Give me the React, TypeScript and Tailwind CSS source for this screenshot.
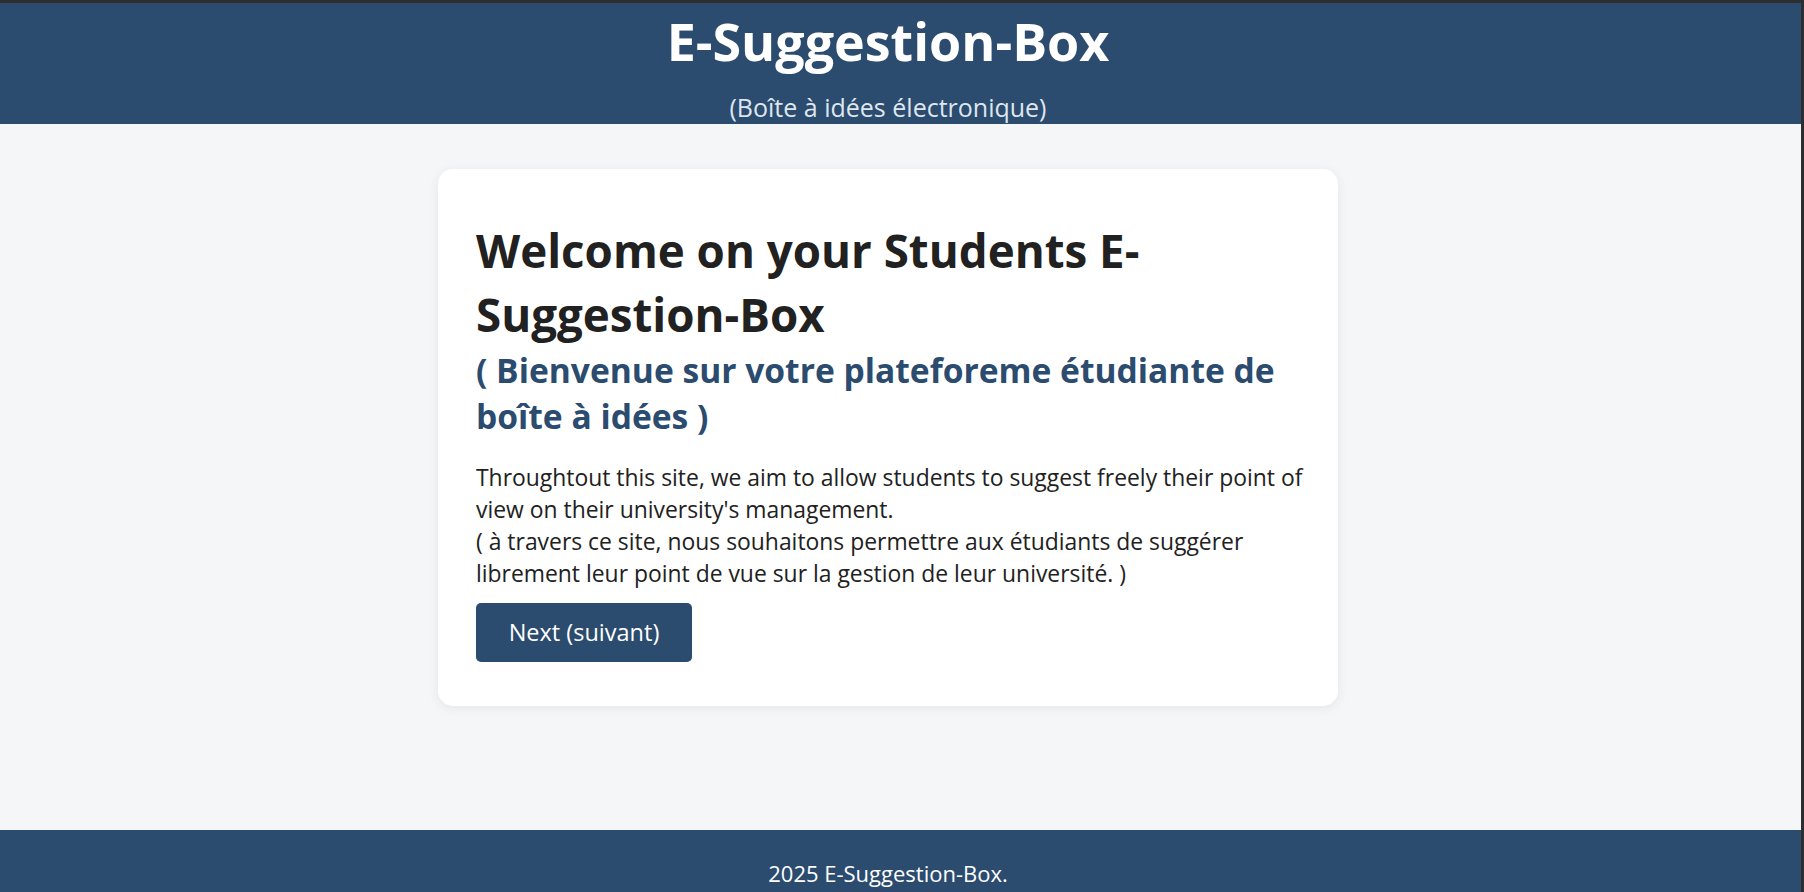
export default function App() {
  return (
    <div
      className="h-screen overflow-hidden flex flex-col bg-[#f5f6f8] border-t-[3px] border-r-[3px] border-[#2d2d30]"
      style={{ fontFamily: '"Open Sans", "Noto Sans", sans-serif' }}
    >
      {/* Header */}
      <header className="h-[121px] shrink-0 overflow-hidden bg-[#2b4b6f] pr-[25px] text-center text-white">
        <h1 className="pt-[12px] text-[52px] leading-[52px] font-bold">E-Suggestion-Box</h1>
        <p className="mt-[28px] text-[25px] leading-[25px] text-[#dfe6ee]">(Boîte à idées électronique)</p>
      </header>

      {/* Main */}
      <main className="flex-1 pr-[25px]">
        <div className="mx-auto mt-[45px] w-[900px] rounded-[15px] bg-white px-[38px] pt-[49px] pb-[44px] shadow-[0_2px_12px_rgba(0,0,0,0.07)]">
          <h2 className="whitespace-nowrap text-[45.7px] leading-[64px] font-bold text-[#212121]">
            Welcome on your Students E-
            <br />
            Suggestion-Box
          </h2>
          <h3 className="mt-[1px] whitespace-nowrap text-[33.6px] leading-[46px] font-bold text-[#2b4b6f]">
            ( Bienvenue sur votre plateforeme étudiante de
            <br />
            boîte à idées )
          </h3>
          <p className="mt-[23px] whitespace-nowrap text-[22.9px] leading-[32px] text-[#212121]">
            Throughtout this site, we aim to allow students to suggest freely their point of
            <br />
            view on their university's management.
            <br />( à travers ce site, nous souhaitons permettre aux étudiants de suggérer
            <br />
            librement leur point de vue sur la gestion de leur université. )
          </p>
          <button className="mt-[13px] flex h-[59px] w-[216px] items-center justify-center rounded-[5px] bg-[#2b4b6f] text-[23.5px] text-white">
            Next (suivant)
          </button>
        </div>
      </main>

      {/* Footer */}
      <footer className="h-[62px] shrink-0 overflow-hidden bg-[#2b4b6f] pr-[25px] pt-[27px] text-center text-[22px] leading-[32px] text-white">
        2025 E-Suggestion-Box.
      </footer>
    </div>
  );
}
